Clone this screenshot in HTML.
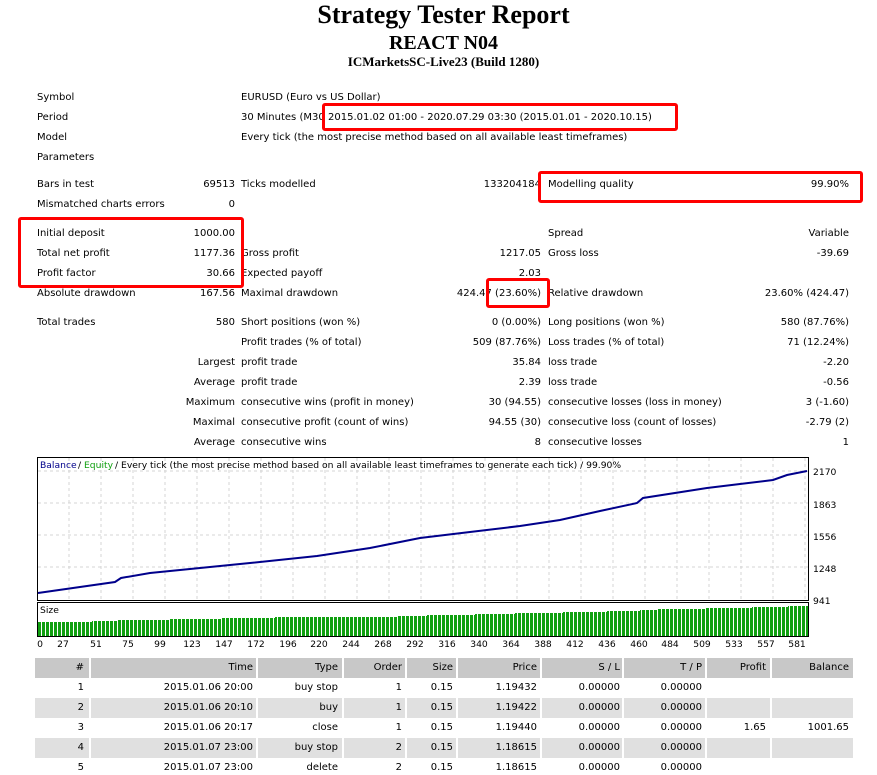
<!DOCTYPE html>
<html><head><meta charset="utf-8"><style>
body{margin:0;width:877px;height:771px;overflow:hidden;background:#fff;font-family:"DejaVu Sans","Liberation Sans",sans-serif;font-size:10px;color:#000;position:relative}
div{position:absolute;white-space:nowrap;line-height:14px}
.t{font-family:"Liberation Serif",serif;font-weight:bold;width:877px;text-align:center;left:5px}
.box{border:3px solid #f00;border-radius:3px;box-sizing:border-box}
.hd{background:#c8c8c8;height:20px}
.gr{background:#e0e0e0;height:20px}
</style></head><body>
<div class="t" style="top:0px;font-size:26px;line-height:30px">Strategy Tester Report</div>
<div class="t" style="top:31px;font-size:20px;line-height:24px">REACT N04</div>
<div class="t" style="top:54px;font-size:13px;line-height:16px">ICMarketsSC-Live23 (Build 1280)</div>

<div style="left:37px;top:91px">Symbol</div><div style="left:241px;top:91px">EURUSD (Euro vs US Dollar)</div>
<div style="left:37px;top:111px">Period</div><div style="left:241px;top:111px">30 Minutes (M30) 2015.01.02 01:00 - 2020.07.29 03:30 (2015.01.01 - 2020.10.15)</div>
<div style="left:37px;top:131px">Model</div><div style="left:241px;top:131px">Every tick (the most precise method based on all available least timeframes)</div>
<div style="left:37px;top:151px">Parameters</div>

<div style="left:37px;top:178px">Bars in test</div><div style="right:642px;top:178px">69513</div><div style="left:241px;top:178px">Ticks modelled</div><div style="right:336px;top:178px">133204184</div><div style="left:548px;top:178px">Modelling quality</div><div style="right:28px;top:178px">99.90%</div>
<div style="left:37px;top:198px">Mismatched charts errors</div><div style="right:642px;top:198px">0</div>
<div style="left:37px;top:227px">Initial deposit</div><div style="right:642px;top:227px">1000.00</div><div style="left:548px;top:227px">Spread</div><div style="right:28px;top:227px">Variable</div>
<div style="left:37px;top:247px">Total net profit</div><div style="right:642px;top:247px">1177.36</div><div style="left:241px;top:247px">Gross profit</div><div style="right:336px;top:247px">1217.05</div><div style="left:548px;top:247px">Gross loss</div><div style="right:28px;top:247px">-39.69</div>
<div style="left:37px;top:267px">Profit factor</div><div style="right:642px;top:267px">30.66</div><div style="left:241px;top:267px">Expected payoff</div><div style="right:336px;top:267px">2.03</div>
<div style="left:37px;top:287px">Absolute drawdown</div><div style="right:642px;top:287px">167.56</div><div style="left:241px;top:287px">Maximal drawdown</div><div style="right:336px;top:287px">424.47 (23.60%)</div><div style="left:548px;top:287px">Relative drawdown</div><div style="right:28px;top:287px">23.60% (424.47)</div>

<div style="left:37px;top:316px">Total trades</div><div style="right:642px;top:316px">580</div><div style="left:241px;top:316px">Short positions (won %)</div><div style="right:336px;top:316px">0 (0.00%)</div><div style="left:548px;top:316px">Long positions (won %)</div><div style="right:28px;top:316px">580 (87.76%)</div>
<div style="left:241px;top:336px">Profit trades (% of total)</div><div style="right:336px;top:336px">509 (87.76%)</div><div style="left:548px;top:336px">Loss trades (% of total)</div><div style="right:28px;top:336px">71 (12.24%)</div>
<div style="right:642px;top:356px">Largest</div><div style="left:241px;top:356px">profit trade</div><div style="right:336px;top:356px">35.84</div><div style="left:548px;top:356px">loss trade</div><div style="right:28px;top:356px">-2.20</div>
<div style="right:642px;top:376px">Average</div><div style="left:241px;top:376px">profit trade</div><div style="right:336px;top:376px">2.39</div><div style="left:548px;top:376px">loss trade</div><div style="right:28px;top:376px">-0.56</div>
<div style="right:642px;top:396px">Maximum</div><div style="left:241px;top:396px">consecutive wins (profit in money)</div><div style="right:336px;top:396px">30 (94.55)</div><div style="left:548px;top:396px">consecutive losses (loss in money)</div><div style="right:28px;top:396px">3 (-1.60)</div>
<div style="right:642px;top:416px">Maximal</div><div style="left:241px;top:416px">consecutive profit (count of wins)</div><div style="right:336px;top:416px">94.55 (30)</div><div style="left:548px;top:416px">consecutive loss (count of losses)</div><div style="right:28px;top:416px">-2.79 (2)</div>
<div style="right:642px;top:436px">Average</div><div style="left:241px;top:436px">consecutive wins</div><div style="right:336px;top:436px">8</div><div style="left:548px;top:436px">consecutive losses</div><div style="right:28px;top:436px">1</div>

<div class="box" style="left:322px;top:103px;width:356px;height:28px;background:#fff"></div>
<div style="left:328px;top:111px;background:#fff">2015.01.02 01:00 - 2020.07.29 03:30 (2015.01.01 - 2020.10.15)</div>
<div class="box" style="left:538px;top:171px;width:325px;height:32px"></div>
<div class="box" style="left:18px;top:217px;width:226px;height:71px"></div>
<div class="box" style="left:486px;top:278px;width:64px;height:30px"></div>

<svg style="position:absolute;left:0;top:0" width="877" height="771">
<defs><pattern id="p" width="4" height="40" patternUnits="userSpaceOnUse" x="38"><rect width="3" height="40" fill="#10a010"/></pattern></defs>
<rect x="37.5" y="457.5" width="771" height="143" fill="none" stroke="#000"/>
<g stroke="#d4d4d4" stroke-dasharray="3,3">
<path d="M69 458V600M101 458V600M133 458V600M165 458V600M197 458V600M229 458V600M261 458V600M293 458V600M325 458V600M357 458V600M389 458V600M421 458V600M453 458V600M485 458V600M517 458V600M549 458V600M581 458V600M613 458V600M645 458V600M677 458V600M709 458V600M741 458V600M773 458V600M805 458V600"/>
<path d="M38 471H808M38 503H808M38 535H808M38 567H808"/>
</g>
<polyline fill="none" stroke="#00008b" stroke-width="2" points="38,593 80,587 115,582 121,578 150,573 200,568 250,563 317,556 370,548 420,538 470,532 520,526 560,520 600,511 637,503 643,498 707,488 740,484 773,480 787,475 807,471"/>
<rect x="37.5" y="602.5" width="771" height="34" fill="none" stroke="#000"/>
<polygon fill="url(#p)" points="38,636 38,622 92,622 92,621 118,621 118,620 170,620 170,619 222,619 222,618 275,618 275,617 397,617 397,616 427,616 427,615 475,615 475,614 515,614 515,613 563,613 563,612 607,612 607,611 640,611 640,610 658,610 658,609 705,609 705,608 752,608 752,607 788,607 788,606 808,606 808,636"/>
<g font-family="DejaVu Sans,sans-serif" font-size="9.2">
<text x="40" y="468" fill="#00008b">Balance</text><text x="78" y="468">/</text><text x="84" y="468" fill="#10a010">Equity</text><text x="115" y="468">/ Every tick (the most precise method based on all available least timeframes to generate each tick) / 99.90%</text>
<text x="40" y="613">Size</text>
<text x="813" y="475">2170</text><text x="813" y="508">1863</text><text x="813" y="540">1556</text><text x="813" y="572">1248</text><text x="813" y="604">941</text>
<g text-anchor="middle"><text x="40" y="647">0</text><text x="63" y="647">27</text><text x="96" y="647">51</text><text x="128" y="647">75</text><text x="160" y="647">99</text><text x="192" y="647">123</text><text x="224" y="647">147</text><text x="256" y="647">172</text><text x="288" y="647">196</text><text x="319" y="647">220</text><text x="351" y="647">244</text><text x="383" y="647">268</text><text x="415" y="647">292</text><text x="447" y="647">316</text><text x="479" y="647">340</text><text x="511" y="647">364</text><text x="543" y="647">388</text><text x="575" y="647">412</text><text x="607" y="647">436</text><text x="639" y="647">460</text><text x="670" y="647">484</text><text x="702" y="647">509</text><text x="734" y="647">533</text><text x="766" y="647">557</text><text x="797" y="647">581</text></g>
</g>
</svg>

<div class="hd" style="left:35px;top:658px;width:818px"></div>
<div class="gr" style="left:35px;top:698px;width:818px"></div>
<div class="gr" style="left:35px;top:738px;width:818px"></div>
<div style="left:89px;top:658px;width:2px;height:113px;background:#fff"></div>
<div style="left:256px;top:658px;width:2px;height:113px;background:#fff"></div>
<div style="left:342px;top:658px;width:2px;height:113px;background:#fff"></div>
<div style="left:405px;top:658px;width:2px;height:113px;background:#fff"></div>
<div style="left:456px;top:658px;width:2px;height:113px;background:#fff"></div>
<div style="left:540px;top:658px;width:2px;height:113px;background:#fff"></div>
<div style="left:622px;top:658px;width:2px;height:113px;background:#fff"></div>
<div style="left:705px;top:658px;width:2px;height:113px;background:#fff"></div>
<div style="left:770px;top:658px;width:2px;height:113px;background:#fff"></div>

<div style="right:793px;top:661px">#</div><div style="right:624px;top:661px">Time</div><div style="right:539px;top:661px">Type</div><div style="right:475px;top:661px">Order</div><div style="right:424px;top:661px">Size</div><div style="right:340px;top:661px">Price</div><div style="right:257px;top:661px">S / L</div><div style="right:175px;top:661px">T / P</div><div style="right:111px;top:661px">Profit</div><div style="right:28px;top:661px">Balance</div>

<div style="right:793px;top:681px">1</div><div style="right:624px;top:681px">2015.01.06 20:00</div><div style="right:539px;top:681px">buy stop</div><div style="right:475px;top:681px">1</div><div style="right:424px;top:681px">0.15</div><div style="right:340px;top:681px">1.19432</div><div style="right:257px;top:681px">0.00000</div><div style="right:175px;top:681px">0.00000</div>
<div style="right:793px;top:701px">2</div><div style="right:624px;top:701px">2015.01.06 20:10</div><div style="right:539px;top:701px">buy</div><div style="right:475px;top:701px">1</div><div style="right:424px;top:701px">0.15</div><div style="right:340px;top:701px">1.19422</div><div style="right:257px;top:701px">0.00000</div><div style="right:175px;top:701px">0.00000</div>
<div style="right:793px;top:721px">3</div><div style="right:624px;top:721px">2015.01.06 20:17</div><div style="right:539px;top:721px">close</div><div style="right:475px;top:721px">1</div><div style="right:424px;top:721px">0.15</div><div style="right:340px;top:721px">1.19440</div><div style="right:257px;top:721px">0.00000</div><div style="right:175px;top:721px">0.00000</div><div style="right:111px;top:721px">1.65</div><div style="right:28px;top:721px">1001.65</div>
<div style="right:793px;top:741px">4</div><div style="right:624px;top:741px">2015.01.07 23:00</div><div style="right:539px;top:741px">buy stop</div><div style="right:475px;top:741px">2</div><div style="right:424px;top:741px">0.15</div><div style="right:340px;top:741px">1.18615</div><div style="right:257px;top:741px">0.00000</div><div style="right:175px;top:741px">0.00000</div>
<div style="right:793px;top:761px">5</div><div style="right:624px;top:761px">2015.01.07 23:00</div><div style="right:539px;top:761px">delete</div><div style="right:475px;top:761px">2</div><div style="right:424px;top:761px">0.15</div><div style="right:340px;top:761px">1.18615</div><div style="right:257px;top:761px">0.00000</div><div style="right:175px;top:761px">0.00000</div>
</body></html>
